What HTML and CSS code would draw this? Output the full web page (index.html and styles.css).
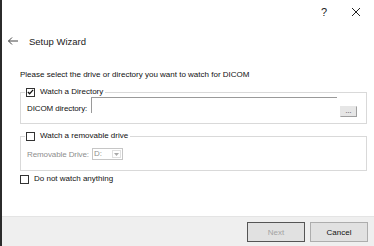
FILE: index.html
```html
<!DOCTYPE html>
<html lang="en">
<head>
  <meta charset="UTF-8" />
  <title>Setup Wizard</title>
  <link rel="stylesheet" href="styles.css">
</head>
<body>
  <div class="window">
    <div class="titlebar">
      <span class="title-btn">?</span>
      <span class="title-btn">
        <svg width="10" height="10" viewBox="0 0 10 10"><path d="M1 1L9 9M9 1L1 9" stroke="#222" stroke-width="1"/></svg>
      </span>
    </div>

    <div class="header">
      <svg class="back" width="10" height="8" viewBox="0 0 10 8"><path d="M0.5 4H10M4 0.5L0.5 4L4 7.5" stroke="#444" fill="none" stroke-width="1"/></svg>
      <span>Setup Wizard</span>
    </div>

    <div class="content">
      <p class="intro">Please select the drive or directory you want to watch for DICOM</p>

      <fieldset class="group">
        <legend><span class="check checked"><svg width="8" height="8" viewBox="0 0 8 8"><path d="M1 4L3 6L7 1.5" stroke="#111" stroke-width="1.4" fill="none"/></svg></span>Watch a Directory</legend>
        <div class="row">
          <span class="field-label">DICOM directory:</span>
          <div class="edit"></div>
          <button class="browse">...</button>
        </div>
      </fieldset>

      <fieldset class="group group-two">
        <legend><span class="check"></span>Watch a removable drive</legend>
        <div class="row disabled">
          <span class="field-label">Removable Drive:</span>
          <div class="combo"><span>D:</span><span class="drop"><svg width="5" height="3" viewBox="0 0 5 3"><path d="M0 0H5L2.5 3Z" fill="#aaa"/></svg></span></div>
        </div>
      </fieldset>

      <div class="option"><span class="check"></span>Do not watch anything</div>
    </div>

    <footer>
      <button class="btn btn-default" disabled>Next</button>
      <button class="btn">Cancel</button>
    </footer>
  </div>
</body>
</html>
```

FILE: styles.css
```css
body {
  margin: 0;
  font-family: "Liberation Sans", Arial, sans-serif;
  font-size: 8px;
  color: #111;
  background: #fff;
}
.window {
  height: 246px;
  box-sizing: border-box;
  border-left: 2px solid #2b2b2b;
  display: flex;
  flex-direction: column;
}
.titlebar {
  height: 24px;
  display: flex;
  justify-content: flex-end;
  align-items: center;
  padding-right: 2px;
}
.title-btn {
  width: 32px;
  text-align: center;
  font-size: 11px;
  color: #222;
  line-height: 10px;
}
.header {
  height: 34px;
  display: flex;
  align-items: center;
  padding-left: 6px;
  font-size: 9.5px;
  color: #222;
}
.header .back {
  margin-right: 11px;
}
.content {
  padding: 0 7px 0 18px;
}
.intro {
  margin: 12px 0 0;
  line-height: 10px;
}
.group {
  margin: 7px 0 0;
  border: 1px solid #d9d9d9;
  padding: 0 5px 0 4px;
}
.group legend {
  padding: 0 2px 0 1px;
  display: flex;
  align-items: center;
  line-height: 10px;
}
.check {
  width: 7px;
  height: 7px;
  border: 1px solid #333;
  background: #fff;
  margin-right: 5px;
  display: inline-flex;
  align-items: center;
  justify-content: center;
}
.row {
  display: flex;
  align-items: center;
  height: 23px;
  padding: 0 0 3px 2px;
}
.field-label {
  width: 64px;
  color: #111;
  letter-spacing: -0.1px;
}
.edit {
  width: 245px;
  height: 15px;
  border-top: 1px solid #9a9a9a;
  border-left: 1px solid #9a9a9a;
  align-self: flex-start;
  margin-top: 0;
}
.browse {
  width: 17px;
  height: 11px;
  margin: 5px 0 0 3px;
  padding: 0;
  font-size: 7px;
  line-height: 8px;
  background: #e6e6e6;
  border: 1px solid #e6e6e6;
  border-right-color: #9f9f9f;
  border-bottom-color: #9f9f9f;
  color: #333;
}
.group-two {
  margin-top: 7px;
}
.group-two .row {
  height: 26px;
  padding-bottom: 3px;
}
.disabled .field-label {
  width: 65px;
  color: #8e8e8e;
}
.combo {
  width: 28px;
  height: 10px;
  border: 1px solid #c6c6c6;
  display: flex;
  justify-content: space-between;
  align-items: center;
  padding-left: 1px;
  font-size: 8px;
  line-height: 8px;
  color: #8e8e8e;
}
.drop {
  width: 9px;
  height: 8px;
  margin-right: 1px;
  border: 1px solid #e0e0e0;
  box-sizing: border-box;
  display: flex;
  align-items: center;
  justify-content: center;
}
.option {
  display: flex;
  align-items: center;
  margin-top: 3px;
  line-height: 10px;
}
footer {
  margin-top: auto;
  height: 30px;
  box-sizing: border-box;
  background: #efefef;
  border-top: 1px solid #e4e4e4;
  display: flex;
  justify-content: flex-end;
  align-items: flex-start;
  gap: 5px;
  padding: 5px 6px 0 0;
}
.btn {
  width: 58px;
  height: 20px;
  font-family: "Liberation Sans", Arial, sans-serif;
  font-size: 8px;
  background: #e1e1e1;
  border: 1px solid #adadad;
  color: #111;
  padding: 0;
}
.btn-default {
  border-color: #555;
  color: #a3a3a3;
}
```
